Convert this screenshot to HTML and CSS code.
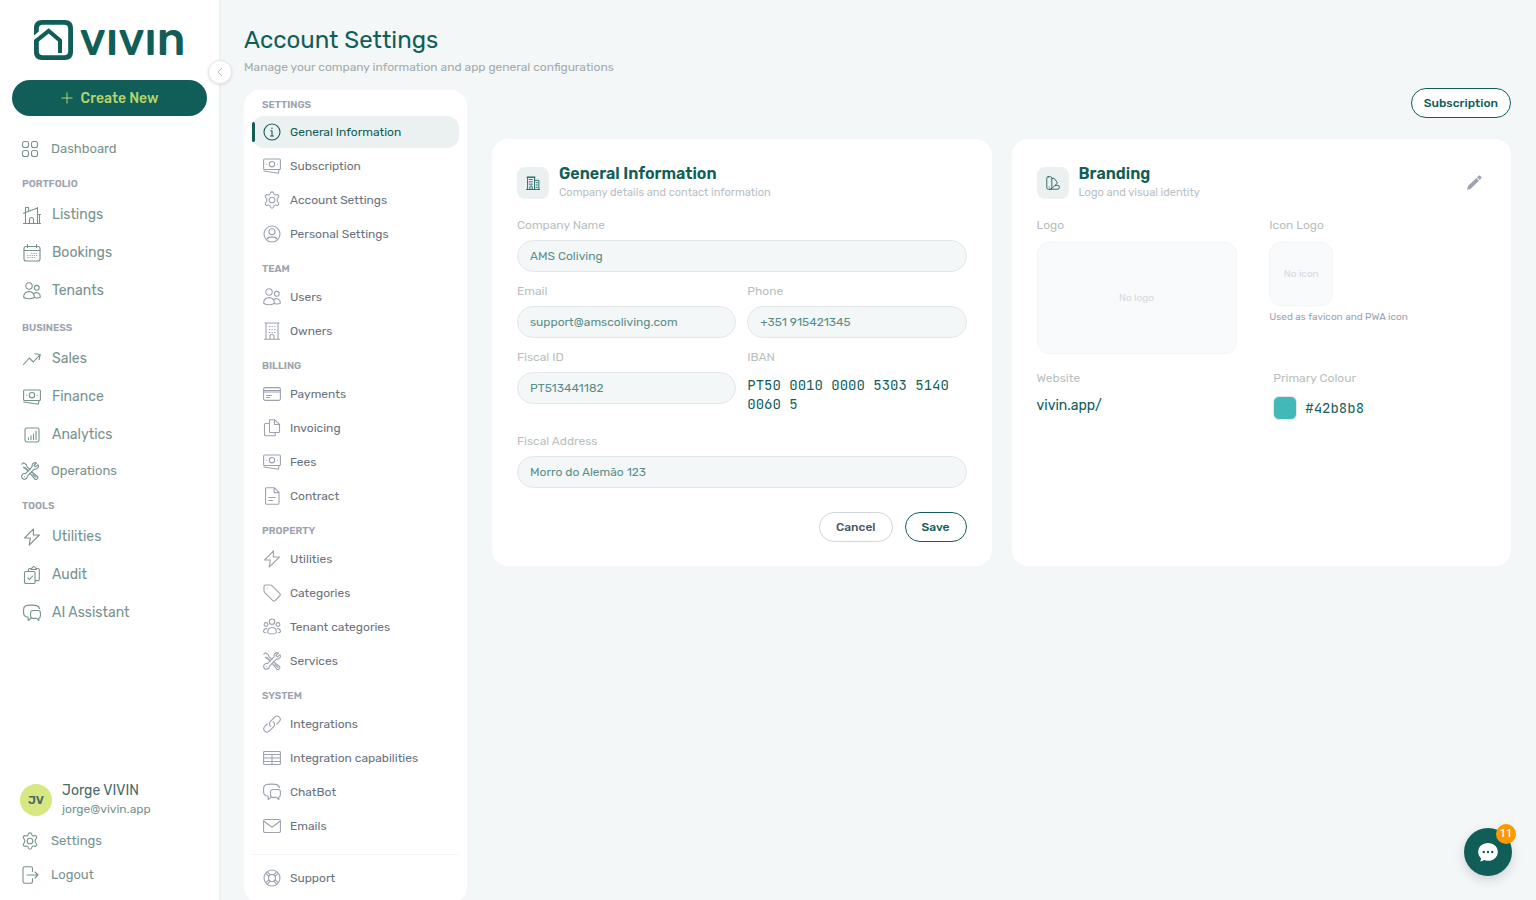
FILE: index.html
```html
<!DOCTYPE html>
<html lang="en">
<head>
    <meta charset="UTF-8">
    <meta name="viewport" content="width=device-width, initial-scale=1.0">
    <title>Account Settings - Vivin</title>
    <link rel="stylesheet" href="styles.css">
</head>
<body>
    <!-- Icon sprite -->
    <svg class="sprite" aria-hidden="true">
        <symbol id="i-grid" viewBox="0 0 18 18"><rect x="1.5" y="1.5" width="6" height="6" rx="2"/><rect x="10.5" y="1.5" width="6" height="6" rx="2"/><rect x="1.5" y="10.5" width="6" height="6" rx="2"/><rect x="10.5" y="10.5" width="6" height="6" rx="2"/></symbol>
        <symbol id="i-home" viewBox="0 0 18 18"><path d="M.5 17.5h17M2.5 17.5V6.5M.5 7.2 14.5 2M14.5 1.5v16M2.5 5.5v-4h3v3M14.5 8.5h3M16.5 8.5v9M6.5 17.5v-4a2 2 0 0 1 4 0v4"/></symbol>
        <symbol id="i-calendar" viewBox="0 0 18 18"><rect x="1" y="2.5" width="16" height="14.5" rx="2"/><path d="M1 6.5h16M4.5.5v3M13.5.5v3"/><path d="M8.8 9.5h5M4.8 11.5h9M4.8 13.5h7" stroke-dasharray=".1 2.1"/></symbol>
        <symbol id="i-users" viewBox="0 0 18 18"><circle cx="6" cy="4" r="3.2"/><circle cx="13.8" cy="5.8" r="2.4"/><path d="M.6 15.2C.6 11.5 3 9.6 6 9.6s5.4 1.9 5.4 5.6c-1.6 2-9.2 2-10.8 0zM10.8 11.6c2.6-2 6.600-.6 6.600 3.400-1 .9-3.500 1.100-5.400.8"/></symbol>
        <symbol id="i-trend" viewBox="0 0 18 18"><path d="M.5 14.500 6.300 8l4 4L17 4.800M11.800 3.800l5.500.7-1.200 5.200"/></symbol>
        <symbol id="i-cash" viewBox="0 0 18 18"><rect x=".6" y="2" width="16.8" height="10.5" rx="1"/><circle cx="9" cy="7.2" r="2.7"/><path d="M3.7 7.200h.1M14.200 7.200h.1M.8 14l14.500 2.200.7-3.600"/></symbol>
        <symbol id="i-chart" viewBox="0 0 18 18"><rect x="2" y="2" width="14" height="14" rx="1.8"/><path d="M5.500 13.500v-1.800M8 13.500v-3.700M10.500 13.500V8M13 13.500V5"/></symbol>
        <symbol id="i-tools" viewBox="0 0 18 18"><path d="M.8 2.2 2.2.8l3 1.6.6 2L9 7.6M7.6 9 4.4 5.8l-2-.6zM10.3 9.8l5.9 4.4a1.9 1.9 0 0 1-2.3 3L9 11.2M12 12.6l3 2.7"/><path d="M15.5 1c-2-1-5 .5-4.3 3.6L4.5 11.6c-2.7-.8-4.6 2-3.5 4.3 1.2 2 5 1.8 5.5-1.8l6.8-7c3.1.6 4.9-2.2 3.7-4.4l-2.5 2.2-1.6-1.5zM3.3 14.7h.2"/></symbol>
        <symbol id="i-bolt" viewBox="0 0 18 18"><path d="M10.5.8 1.6 10h5.8L6.2 17.2 16.4 7h-6.1z"/></symbol>
        <symbol id="i-audit" viewBox="0 0 18 18"><rect x="1.5" y="5.5" width="10.5" height="12" rx="1.2"/><path d="M5.5 5V3.6c0-.7.5-1.1 1.1-1.1H8M13 2.5h2c.7 0 1.3.5 1.3 1.1v9.8c0 .7-.6 1.2-1.3 1.2h-2.5M8 3.5c0-1 .6-1.6 1.4-1.6.5-1.8 2.3-1.8 2.8 0 .8 0 1.3.6 1.3 1.6zM4.8 11.8l1.7 1.9L9.6 10"/></symbol>
        <symbol id="i-chat" viewBox="0 0 18 18"><path d="M8.3 14.100 5.200 16.500v-3.200c-3.300-.4-4.600-1.500-4.600-4.300V5.500C.6 2.600 2 1.700 4.600 1.400c2.600-.3 5.400-.3 8 0 2.300.3 3.500 1.200 3.900 3.200"/><path d="M10 6.500h5.200c1.500 0 2.200.8 2.200 2.200v3c0 1.400-.5 2.200-1.700 2.500l.2 2.300-2.400-2.100H9.800c-1.500 0-2.200-.8-2.200-2.200V8.800c0-1.400.8-2.300 2.400-2.300z"/></symbol>
        <symbol id="i-gear" viewBox="0 0 18 18"><circle cx="9" cy="9" r="2.8"/><path d="M7.200 2.500c.4-2.200 3.200-2.200 3.600 0 .2 1.100 1.300 1.800 2.400 1.300 2.100-.7 3.500 1.700 1.800 3.100-.9.8-.9 1.400-.9 2.100s0 1.300.9 2.100c1.700 1.400.3 3.800-1.800 3.100-1.100-.5-2.200.2-2.400 1.300-.4 2.200-3.200 2.200-3.600 0-.2-1.100-1.300-1.800-2.400-1.300-2.100.7-3.500-1.700-1.800-3.100.9-.8.9-1.400.9-2.100s0-1.300-.9-2.100c-1.700-1.400-.3-3.800 1.800-3.100 1.100.5 2.200-.2 2.400-1.300z"/></symbol>
        <symbol id="i-logout" viewBox="0 0 18 18"><path d="M11.5 5.500v-3c0-1-.6-1.700-1.600-1.700H3.700C2.700.8 2 1.500 2 2.500v13c0 1 .7 1.700 1.700 1.700h6.200c1 0 1.600-.7 1.600-1.700v-3M6 9h11M14 6l3 3-3 3"/></symbol>
        <symbol id="i-info" viewBox="0 0 18 18"><circle cx="9" cy="9" r="8"/><path d="M7.800 7.800H9v5M7.500 13h3M9 5v.5"/></symbol>
        <symbol id="i-person" viewBox="0 0 18 18"><circle cx="9" cy="9" r="8"/><circle cx="9" cy="6.8" r="3"/><path d="M3.5 14.700c1.600-3.800 9.400-3.800 11 0"/></symbol>
        <symbol id="i-building" viewBox="0 0 18 18"><path d="M1.500 17.200h15M3 17V1h12v16M2 1h14M7 17v-2.500a2 2 0 0 1 4 0V17"/><path d="M6.200 4.500h6M6.200 7.500h6M6.200 10.500h6" stroke-dasharray=".5 2.200"/></symbol>
        <symbol id="i-card" viewBox="0 0 18 18"><rect x=".6" y="2.6" width="16.8" height="12.8" rx="1.6"/><path d="M.6 5.500h16.800M.6 7h16.800M3.500 10.500h5M3.500 12.500h3"/></symbol>
        <symbol id="i-copy" viewBox="0 0 18 18"><path d="M12.200 13.500v3.200H2.500c-.6 0-1-.4-1-1V5.500c0-.6.4-1 1-1h3M6.500.8h5.200l4.800 4.500v7.200c0 .6-.4 1-1 1h-8c-.6 0-1-.4-1-1zM11.500.8v4.700h5"/></symbol>
        <symbol id="i-doc" viewBox="0 0 18 18"><path d="M3.500.8h8L16 5.300v11c0 .5-.4.9-.9.9H3.500c-.5 0-.9-.4-.9-.9V1.700c0-.5.4-.9.9-.9zM11.200.8v4.800H16M5.800 10.500h6.500M5.800 13.500h4"/></symbol>
        <symbol id="i-tag" viewBox="0 0 18 18"><path d="M2.700 1h4.600c.7 0 1.100.2 1.600.6l7.700 7.700c.9.9.9 1.800 0 2.700l-4.300 4.400c-.9.9-1.800.9-2.700 0L1.800 8.700C1.300 8.200 1 7.800 1 7.100V2.700C1 1.700 1.700 1 2.700 1zM4 4h.1"/></symbol>
        <symbol id="i-group" viewBox="0 0 18 18"><circle cx="9" cy="3.7" r="2.7"/><circle cx="3" cy="6.5" r="1.9"/><circle cx="15" cy="6.5" r="1.9"/><path d="M4.600 14.500c0-3 1.700-5 4.400-5s4.400 2 4.400 5c-1.500 2-7.300 2-8.800 0zM3.800 10.800c-1.700-.6-3.300.7-3.300 3 .4.9 1.300 1 2.400 1M14.200 10.800c1.700-.6 3.300.7 3.300 3-.4.9-1.300 1-2.400 1"/></symbol>
        <symbol id="i-link" viewBox="0 0 18 18"><path d="M7.700 11.500C6 10 6 7.800 7.500 6.300l4-4.200c1.400-1.500 3.300-1.500 4.600-.2 1.500 1.400 1.500 3.300.1 4.800L13.800 9M10.200 6.600c1.800 1.500 1.900 3.600.3 5.200l-4 4.100c-1.400 1.500-3.300 1.500-4.700.2-1.400-1.400-1.400-3.300 0-4.800L4.200 9"/></symbol>
        <symbol id="i-table" viewBox="0 0 18 18"><rect x=".6" y="2.5" width="16.8" height="13" rx=".8"/><path d="M.6 5.500h16.800M.6 9h16.800M.6 12.500h16.800M9 5.500v10"/></symbol>
        <symbol id="i-mail" viewBox="0 0 18 18"><rect x=".6" y="2.5" width="16.8" height="13" rx="1.2"/><path d="M1.500 4.500 7.600 9.300c.9.7 1.900.7 2.800 0l6.100-4.800"/></symbol>
        <symbol id="i-support" viewBox="0 0 18 18"><circle cx="9" cy="9" r="8"/><circle cx="9" cy="9" r="3.5"/><path d="m5.800 7.200-3-2.700M7.200 5.800l-2.700-3M10.800 5.800l2.700-3M12.200 7.200l3-2.700M12.200 10.800l3 2.700M10.800 12.200l2.700 3M7.200 12.200l-2.700 3M5.800 10.800l-3 2.700"/></symbol>
        <symbol id="i-office" viewBox="0 0 18 18"><path d="M.5 17.300h17M2 17V1.500h9V17M1.200 1.500h10.600M11 5.500h5.500V17M5 17v-2.800a1.500 1.500 0 0 1 3 0V17"/><path d="M4.200 4.500h5M4.200 7.500h5M4.200 10.500h5M13 8.500h2M13 11.500h2M13 14.500h2" stroke-dasharray="1.5 1"/></symbol>
        <symbol id="i-palette" viewBox="0 0 18 18"><rect x="1" y="1" width="6.5" height="16" rx="1.8"/><path d="M7.500 3.500 9 2.900c1-.3 1.700 0 2.200.8l3 4.300c.5.8.4 1.500-.3 2.100L6.800 16.500M11.800 12h3.500c1.100 0 1.700.6 1.700 1.700v1.600c0 1.100-.6 1.700-1.700 1.700H4.500M4.200 14h.1"/></symbol>
    </svg>

    <aside class="sidebar">
        <a class="logo" href="#" aria-label="vivin">
            <svg class="logo-mark" viewBox="0 0 40 40" aria-hidden="true">
                <path d="M0 15.500V8C0 3 3 0 8 0h23c5 0 8 3 8 8v24c0 5-3 8-8 8H8c-5 0-8-3-8-8V20L14.700 8.200 28 19.500V33h-4V21.500l-9.300-8L4.800 21.500V31c0 3 1.200 4.200 4.200 4.200h21c3 0 4.200-1.200 4.200-4.200V9c0-3-1.200-4.200-4.200-4.200H9C6 4.800 4.800 6 4.800 9v2.500z"/>
            </svg>
            <span class="logo-word">vıvın</span>
        </a>
        <button class="create-button" type="button">
            <svg class="plus" viewBox="0 0 12 12" aria-hidden="true"><path d="M6 .5v11M.5 6h11"/></svg>
            Create New
        </button>
        <nav class="main-nav" aria-label="Main">
            <a class="nav-link compact" href="#"><svg class="icon"><use href="#i-grid"/></svg>Dashboard</a>
            <h2 class="nav-heading">Portfolio</h2>
            <a class="nav-link" href="#"><svg class="icon"><use href="#i-home"/></svg>Listings</a>
            <a class="nav-link" href="#"><svg class="icon"><use href="#i-calendar"/></svg>Bookings</a>
            <a class="nav-link" href="#"><svg class="icon"><use href="#i-users"/></svg>Tenants</a>
            <h2 class="nav-heading">Business</h2>
            <a class="nav-link" href="#"><svg class="icon"><use href="#i-trend"/></svg>Sales</a>
            <a class="nav-link" href="#"><svg class="icon"><use href="#i-cash"/></svg>Finance</a>
            <a class="nav-link" href="#"><svg class="icon"><use href="#i-chart"/></svg>Analytics</a>
            <a class="nav-link compact" href="#"><svg class="icon"><use href="#i-tools"/></svg>Operations</a>
            <h2 class="nav-heading">Tools</h2>
            <a class="nav-link" href="#"><svg class="icon"><use href="#i-bolt"/></svg>Utilities</a>
            <a class="nav-link" href="#"><svg class="icon"><use href="#i-audit"/></svg>Audit</a>
            <a class="nav-link" href="#"><svg class="icon"><use href="#i-chat"/></svg>AI Assistant</a>
        </nav>
        <div class="sidebar-footer">
            <div class="user">
                <div class="avatar">JV</div>
                <div>
                    <div class="user-name">Jorge VIVIN</div>
                    <div class="user-email">jorge@vivin.app</div>
                </div>
            </div>
            <a class="nav-link compact" href="#"><svg class="icon"><use href="#i-gear"/></svg>Settings</a>
            <a class="nav-link compact" href="#"><svg class="icon"><use href="#i-logout"/></svg>Logout</a>
        </div>
        <button class="collapse-button" type="button" aria-label="Collapse sidebar">
            <svg viewBox="0 0 10 10" aria-hidden="true"><path d="M7 1 3 5l4 4"/></svg>
        </button>
    </aside>

    <main class="main">
        <header class="page-header">
            <h1>Account Settings</h1>
            <p>Manage your company information and app general configurations</p>
        </header>

        <div class="layout">
            <nav class="settings-nav" aria-label="Settings">
                <h2 class="settings-heading">Settings</h2>
                <a class="settings-link active" href="#"><svg class="icon"><use href="#i-info"/></svg>General Information</a>
                <a class="settings-link" href="#"><svg class="icon"><use href="#i-cash"/></svg>Subscription</a>
                <a class="settings-link" href="#"><svg class="icon"><use href="#i-gear"/></svg>Account Settings</a>
                <a class="settings-link" href="#"><svg class="icon"><use href="#i-person"/></svg>Personal Settings</a>
                <h2 class="settings-heading">Team</h2>
                <a class="settings-link" href="#"><svg class="icon"><use href="#i-users"/></svg>Users</a>
                <a class="settings-link" href="#"><svg class="icon"><use href="#i-building"/></svg>Owners</a>
                <h2 class="settings-heading">Billing</h2>
                <a class="settings-link" href="#"><svg class="icon"><use href="#i-card"/></svg>Payments</a>
                <a class="settings-link" href="#"><svg class="icon"><use href="#i-copy"/></svg>Invoicing</a>
                <a class="settings-link" href="#"><svg class="icon"><use href="#i-cash"/></svg>Fees</a>
                <a class="settings-link" href="#"><svg class="icon"><use href="#i-doc"/></svg>Contract</a>
                <h2 class="settings-heading">Property</h2>
                <a class="settings-link" href="#"><svg class="icon"><use href="#i-bolt"/></svg>Utilities</a>
                <a class="settings-link" href="#"><svg class="icon"><use href="#i-tag"/></svg>Categories</a>
                <a class="settings-link" href="#"><svg class="icon"><use href="#i-group"/></svg>Tenant categories</a>
                <a class="settings-link" href="#"><svg class="icon"><use href="#i-tools"/></svg>Services</a>
                <h2 class="settings-heading">System</h2>
                <a class="settings-link" href="#"><svg class="icon"><use href="#i-link"/></svg>Integrations</a>
                <a class="settings-link" href="#"><svg class="icon"><use href="#i-table"/></svg>Integration capabilities</a>
                <a class="settings-link" href="#"><svg class="icon"><use href="#i-chat"/></svg>ChatBot</a>
                <a class="settings-link" href="#"><svg class="icon"><use href="#i-mail"/></svg>Emails</a>
                <hr class="settings-divider">
                <a class="settings-link" href="#"><svg class="icon"><use href="#i-support"/></svg>Support</a>
            </nav>

            <div class="content">
                <div class="toolbar">
                    <button class="button button-primary button-narrow" type="button">Subscription</button>
                </div>
                <div class="cards">
                    <section class="card">
                        <div class="card-header">
                            <div class="card-icon"><svg class="icon"><use href="#i-office"/></svg></div>
                            <div>
                                <h2>General Information</h2>
                                <p>Company details and contact information</p>
                            </div>
                        </div>
                        <form class="form">
                            <div class="field wide">
                                <label for="company">Company Name</label>
                                <input id="company" type="text" value="AMS Coliving">
                            </div>
                            <div class="field">
                                <label for="email">Email</label>
                                <input id="email" type="email" value="support@amscoliving.com">
                            </div>
                            <div class="field">
                                <label for="phone">Phone</label>
                                <input id="phone" type="tel" value="+351 915421345">
                            </div>
                            <div class="field">
                                <label for="fiscal-id">Fiscal ID</label>
                                <input id="fiscal-id" type="text" value="PT513441182">
                            </div>
                            <div class="field">
                                <span class="label">IBAN</span>
                                <div class="iban mono">PT50 0010 0000 5303 5140 0060 5</div>
                            </div>
                            <div class="field wide">
                                <label for="address">Fiscal Address</label>
                                <input id="address" type="text" value="Morro do Alemão 123">
                            </div>
                            <div class="form-actions wide">
                                <button class="button" type="button">Cancel</button>
                                <button class="button button-primary" type="submit">Save</button>
                            </div>
                        </form>
                    </section>

                    <section class="card">
                        <div class="card-header">
                            <div class="card-icon"><svg class="icon"><use href="#i-palette"/></svg></div>
                            <div>
                                <h2>Branding</h2>
                                <p>Logo and visual identity</p>
                            </div>
                            <button class="edit-button" type="button" aria-label="Edit branding">
                                <svg viewBox="0 0 16 16" aria-hidden="true"><path d="M1 15l1-4 8.300-8 2.700 2.700-8.300 8zM11 2.300l1.400-1.400c.6-.6 1.300-.6 1.800 0l.9.9c.6.6.6 1.200 0 1.800L13.700 5z"/></svg>
                            </button>
                        </div>
                        <div class="brand-images">
                            <div>
                                <span class="label">Logo</span>
                                <div class="placeholder placeholder-logo">No logo</div>
                            </div>
                            <div>
                                <span class="label">Icon Logo</span>
                                <div class="placeholder placeholder-icon">No icon</div>
                                <p class="hint">Used as favicon and PWA icon</p>
                            </div>
                        </div>
                        <div class="brand-details">
                            <div>
                                <span class="label">Website</span>
                                <div class="website">vivin.app/</div>
                            </div>
                            <div>
                                <span class="label">Primary Colour</span>
                                <div class="colour mono"><span class="swatch"></span>#42b8b8</div>
                            </div>
                        </div>
                    </section>
                </div>
            </div>
        </div>
    </main>

    <button class="chat-button" type="button" aria-label="Open chat">
        <svg viewBox="0 0 20 20" aria-hidden="true"><path class="bubble" d="M10 1c5.500 0 9.800 3.800 9.800 8.900s-4.300 8.900-9.800 8.900c-1.500 0-2.800-.2-4-.7-1.200 1-2.600 1.300-4 1.200.8-1 1.100-2 .9-3.300C1.200 14.300.2 12.300.2 9.900.2 4.800 4.500 1 10 1z"/><circle cx="5.800" cy="10" r="1.200"/><circle cx="10" cy="10" r="1.200"/><circle cx="14.200" cy="10" r="1.200"/></svg>
        <span class="badge">11</span>
    </button>
</body>
</html>
```
FILE: styles.css
```css
* {
    margin: 0;
    padding: 0;
    box-sizing: border-box;
}

body {
    font-family: Rubik, Inter, sans-serif;
    font-size: 12px;
    line-height: 16px;
    background: #f3f7f8;
    color: #115e59;
    height: 100vh;
    display: flex;
    overflow: hidden;
}

a {
    color: inherit;
    text-decoration: none;
}

button {
    font-family: inherit;
    cursor: pointer;
}

.sprite {
    position: absolute;
    width: 0;
    height: 0;
}

.icon {
    width: 18px;
    height: 18px;
    flex-shrink: 0;
    fill: none;
    stroke: currentColor;
    stroke-width: 1.1;
    stroke-linecap: round;
    stroke-linejoin: round;
}

.mono {
    font-family: "JetBrains Mono", "DejaVu Sans Mono", monospace;
    font-size: 14px;
}

/* Sidebar */
.sidebar {
    position: relative;
    width: 221px;
    flex-shrink: 0;
    display: flex;
    flex-direction: column;
    padding: 20px 12px 8px;
    background: #fff;
    border-right: 2px solid #edf1f3;
}

.logo {
    display: flex;
    align-items: center;
    justify-content: center;
    gap: 6px;
    height: 40px;
    margin-bottom: 20px;
}

.logo-mark {
    width: 40px;
    height: 40px;
    fill: #115e59;
}

.logo-word {
    font-size: 46px;
    font-weight: 500;
    line-height: 36px;
}

.create-button {
    display: flex;
    align-items: center;
    justify-content: center;
    gap: 8px;
    height: 36px;
    flex-shrink: 0;
    border: none;
    border-radius: 18px;
    background: #115e59;
    color: #b5d56a;
    font-size: 14px;
    font-weight: 500;
}

.plus {
    width: 12px;
    height: 12px;
    fill: none;
    stroke: currentColor;
}

.main-nav {
    margin-top: 16px;
}

.nav-link {
    display: flex;
    align-items: center;
    gap: 11px;
    height: 38px;
    padding-left: 11px;
    color: #77938f;
    font-size: 14px;
}

.nav-link.compact {
    gap: 12px;
    height: 34px;
    padding-left: 9px;
    font-size: 13px;
}

.nav-heading {
    padding: 10px 10px 4px;
    color: #9ca3af;
    font-size: 10px;
    font-weight: 600;
    line-height: 16px;
    text-transform: uppercase;
}

.sidebar-footer {
    margin-top: auto;
}

.user {
    display: flex;
    align-items: center;
    gap: 10px;
    padding: 0 8px 6px;
}

.avatar {
    width: 32px;
    height: 32px;
    border-radius: 50%;
    background: #d7e882;
    color: #4a6b64;
    font-weight: 600;
    line-height: 32px;
    text-align: center;
}

.user-name {
    color: #4b6b69;
    font-size: 14px;
    line-height: 18px;
}

.user-email {
    color: #77938f;
    line-height: 18px;
}

.collapse-button {
    position: absolute;
    top: 60px;
    right: -13px;
    display: flex;
    align-items: center;
    justify-content: center;
    width: 24px;
    height: 24px;
    border: 1px solid #e5e7eb;
    border-radius: 50%;
    background: #fff;
    box-shadow: 0 1px 3px rgba(0, 0, 0, 0.12);
}

.collapse-button svg {
    width: 10px;
    height: 10px;
    fill: none;
    stroke: #b6bcc6;
}

/* Page */
.main {
    flex: 1;
    min-width: 0;
    padding: 24px 25px 0 23px;
}

.page-header h1 {
    font-size: 24px;
    font-weight: 400;
    line-height: 32px;
}

.page-header p {
    margin: 3px 0 15px;
    color: #a3abab;
}

.layout {
    display: flex;
    align-items: flex-start;
    gap: 25px;
}

.settings-nav {
    width: 223px;
    flex-shrink: 0;
    padding: 7px 8px;
    border-radius: 16px;
    background: #fff;
}

.settings-heading {
    padding: 9px 10px 4px;
    color: #9ca3af;
    font-size: 10px;
    font-weight: 600;
    line-height: 16px;
    text-transform: uppercase;
}

.settings-heading:first-child {
    padding-top: 0;
    padding-bottom: 3px;
}

.settings-link {
    position: relative;
    display: flex;
    align-items: center;
    gap: 9px;
    height: 32px;
    margin-bottom: 2px;
    padding-left: 11px;
    border-radius: 12px;
    color: #6b7280;
}

.settings-link .icon {
    color: #9ca3af;
}

.settings-link.active,
.settings-link.active .icon {
    color: #115e59;
}

.settings-link.active {
    background: #ebf1f1;
}

.settings-link.active::before {
    content: "";
    position: absolute;
    left: 0;
    top: 6px;
    width: 3px;
    height: 20px;
    border-radius: 2px;
    background: #115e59;
}

.settings-divider {
    margin: 12px 0 7px;
    border: none;
    border-top: 1px solid #f3f4f6;
}

.content {
    flex: 1;
    min-width: 0;
}

.toolbar {
    display: flex;
    justify-content: flex-end;
    margin: -2px 0 21px;
}

.button {
    height: 30px;
    padding: 0 16px;
    border: 1px solid #d1d5db;
    border-radius: 15px;
    background: #fff;
    color: #4b5563;
    font-size: 12px;
    font-weight: 500;
}

.button-primary {
    border-color: #115e59;
    color: #115e59;
}

.button-narrow {
    padding: 0 12px;
}

.cards {
    display: grid;
    grid-template-columns: 1fr 1fr;
    gap: 20px;
}

.card {
    padding: 25px 25px 24px;
    border-radius: 16px;
    background: #fff;
}

.card-header {
    display: flex;
    align-items: center;
    gap: 10px;
    margin-bottom: 15px;
}

.card-header h2 {
    font-size: 16px;
    font-weight: 600;
    line-height: 20px;
}

.card-header p {
    color: #b9bfc4;
    font-size: 11px;
    line-height: 18px;
}

.card-icon {
    display: flex;
    align-items: center;
    justify-content: center;
    width: 32px;
    height: 32px;
    border-radius: 8px;
    background: #ebf1f1;
}

.card-icon .icon {
    width: 14px;
    height: 14px;
}

.edit-button {
    display: flex;
    align-items: center;
    justify-content: center;
    width: 24px;
    height: 24px;
    margin-left: auto;
    border: none;
    background: none;
}

.edit-button svg {
    width: 16px;
    height: 16px;
    fill: #9ca3af;
}

/* Company form */
.form {
    display: grid;
    grid-template-columns: 1fr 1fr;
    gap: 11px;
}

.wide {
    grid-column: 1 / -1;
}

label,
.label {
    display: block;
    color: #b9bfc0;
}

.field input {
    display: block;
    width: 100%;
    height: 32px;
    margin-top: 7px;
    padding: 0 12px;
    border: 1px solid #e3e7ea;
    border-radius: 16px;
    background: #f3f7f8;
    color: #588e8a;
    font-family: inherit;
    font-size: 12px;
}

.iban {
    padding: 11px 0 8px;
    line-height: 19px;
}

.form-actions {
    display: flex;
    justify-content: flex-end;
    gap: 12px;
    margin-top: 13px;
}

/* Branding */
.brand-images {
    display: grid;
    grid-template-columns: 1fr 1fr;
    gap: 16px;
    margin-bottom: 16px;
}

.placeholder {
    display: flex;
    align-items: center;
    justify-content: center;
    margin-top: 9px;
    border: 1px solid #f3f4f6;
    border-radius: 12px;
    background: #f9fafb;
    color: #d5d9df;
    font-size: 10px;
}

.placeholder-logo {
    max-width: 200px;
    height: 112px;
}

.placeholder-icon {
    width: 64px;
    height: 64px;
}

.hint {
    margin-top: 3px;
    color: #9ca3af;
    font-size: 10px;
}

.brand-details {
    display: grid;
    grid-template-columns: 1fr 1fr;
    gap: 24px;
}

.website {
    margin-top: 10px;
    font-size: 14px;
    line-height: 20px;
}

.colour {
    display: flex;
    align-items: center;
    gap: 8px;
    margin-top: 10px;
}

.swatch {
    width: 24px;
    height: 24px;
    border: 1px solid #e5e7eb;
    border-radius: 6px;
    background: #42b8b8;
}

/* Chat launcher */
.chat-button {
    position: fixed;
    right: 24px;
    bottom: 24px;
    display: flex;
    align-items: center;
    justify-content: center;
    width: 48px;
    height: 48px;
    border: none;
    border-radius: 50%;
    background: #115e59;
    box-shadow: 0 4px 12px rgba(0, 0, 0, 0.15);
}

.chat-button svg {
    width: 20px;
    height: 20px;
    fill: #115e59;
}

.chat-button .bubble {
    fill: #fff;
}

.badge {
    position: absolute;
    top: -4px;
    right: -4px;
    width: 20px;
    height: 20px;
    border-radius: 50%;
    background: #ff9800;
    color: #fff;
    font-family: Roboto, sans-serif;
    font-size: 11px;
    font-weight: 500;
    line-height: 20px;
    text-align: center;
}
```
